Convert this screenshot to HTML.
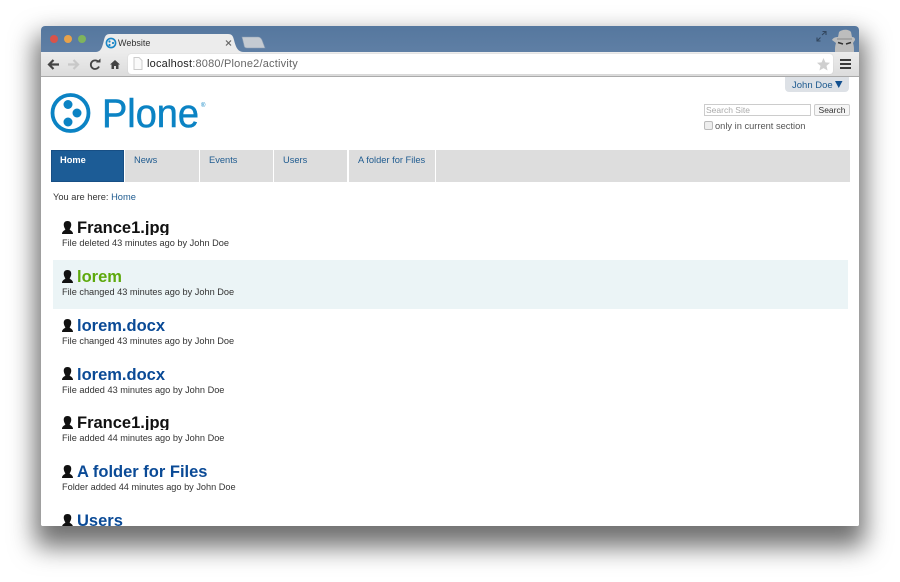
<!DOCTYPE html>
<html><head><meta charset="utf-8"><style>
html,body{margin:0;padding:0;background:#fff;width:900px;height:582px;overflow:hidden;font-family:"Liberation Sans",sans-serif}
.a{position:absolute;white-space:nowrap}
#win{position:absolute;left:41px;top:26px;width:818px;height:500px;border-radius:4px 4px 2px 2px;background:#fff;box-shadow:0 15px 25px 6px rgba(0,0,0,.56)}
#clip{position:absolute;left:0;top:0;width:818px;height:500px;overflow:hidden;border-radius:4px 4px 2px 2px;background:#fff}
.t{position:absolute;left:36px;font-weight:bold;font-size:16.5px;line-height:20px;white-space:nowrap;height:17px;overflow:hidden}
.s{position:absolute;left:21px;font-size:9.2px;line-height:12px;color:#333;white-space:nowrap}
.nav{position:absolute;top:124px;height:32px;background:#ddd;font-size:9.3px;color:#205c90}
.nav span{position:absolute;top:5px;white-space:nowrap}
</style></head><body>
<div id="win"><div id="clip">
<div class="a" style="left:0;top:0;width:818px;height:26px;background:linear-gradient(#55779e,#5f7fa5)"></div>
<svg class="a" style="left:0;top:0" width="230" height="27">
<circle cx="13" cy="13" r="4" fill="#d9534a"/><circle cx="27" cy="13" r="4" fill="#e8a24a"/><circle cx="41" cy="13" r="4" fill="#7fb45c"/>
<path d="M54 26C60 26 61 22 63 14C64 10 65 8 69 8H187C191 8 192 10 193 14C195 22 197 26 203 26Z" fill="#ececec"/>
<path d="M201 11H217C219 11 220 12 221 14L224 22H206C204 22 203 21 203 19Z" fill="#c5cbd2" stroke="#8a9cb2" stroke-width=".6"/>
<circle cx="70" cy="17" r="4.6" fill="none" stroke="#1a87c7" stroke-width="1.6"/><circle cx="68.5" cy="15.5" r="1.1" fill="#1a87c7"/><circle cx="72" cy="17" r="1.1" fill="#1a87c7"/><circle cx="68.5" cy="19" r="1.1" fill="#1a87c7"/>
<path d="M185 14.5L190 19.500M190 14.500L185 19.500" stroke="#666" stroke-width="1.200"/>
</svg>
<div class="a" style="left:77px;top:11px;font-size:9px;line-height:12px;color:#333">Website</div>
<svg class="a" style="left:770px;top:0" width="48" height="26">
<path d="M6 15L9.500 11.500M11 9L15 5.500M11.500 5.500H15V9M6 11.500V15H9.500" stroke="#33475f" stroke-width="1.100" fill="none"/>
<path d="M24 26C24 22 24 20 25 17L21 14C22 12 24 11 27 11L28 6C31 3 38 3 40 6L41 11C43 11 44 12 44 14L42 17C43 20 43 22 43 26Z" fill="#bdbdbd"/>
<path d="M26 13H41" stroke="#959595" stroke-width="1.200"/><path d="M27 16.500L32 18M40 16.500L35 18" stroke="#333" stroke-width="1.500"/>
</svg>
<div class="a" style="left:0;top:26px;width:818px;height:25px;background:linear-gradient(#ececec,#dcdcdc);border-bottom:1px solid #aaa;box-sizing:border-box"></div>
<svg class="a" style="left:0;top:26px" width="90" height="25">
<path d="M18 12.500H8M12.500 8L8 12.500L12.500 17" stroke="#444" stroke-width="2.200" fill="none"/>
<path d="M27 12.500H37M32.500 8L37 12.500L32.500 17" stroke="#c8c8c8" stroke-width="2.200" fill="none"/>
<path d="M57.500 10A4.300 4.300 0 1 0 58 14.500" stroke="#444" stroke-width="1.800" fill="none"/><path d="M55 10.500H59.500V6.500Z" fill="#444"/>
<path d="M69 12.500L74 8L79 12.500H77.500V17H75V14H73V17H70.500V12.500Z" fill="#444"/>
</svg>
<div class="a" style="left:87px;top:28px;width:705px;height:20px;background:#fff;border-radius:3px;box-shadow:0 0 1px #bbb"></div>
<svg class="a" style="left:92px;top:31px" width="10" height="13"><path d="M1 .5H6L9 3.500V12.500H1Z" fill="#fafafa" stroke="#ccc"/></svg>
<div class="a" style="left:106px;top:31px;font-size:11px;line-height:14px;letter-spacing:.2px;color:#666"><span style="color:#222">localhost</span>:8080/Plone2/activity</div>
<svg class="a" style="left:775px;top:31px" width="15" height="15"><path d="M7.500 1L9.400 5.400L14 5.800L10.500 8.900L11.600 13.500L7.500 11.100L3.400 13.500L4.500 8.900L1 5.800L5.600 5.400Z" fill="#cfcfcf"/></svg>
<svg class="a" style="left:799px;top:33px" width="12" height="11"><path d="M0 1H11M0 5H11M0 9H11" stroke="#222" stroke-width="1.800"/></svg>
<div class="a" style="left:744px;top:51px;width:64px;height:15px;background:#dde1e6;border-radius:0 0 4px 4px"></div>
<div class="a" style="left:751px;top:54px;font-size:9.5px;line-height:12px;color:#205c90">John Doe</div>
<svg class="a" style="left:794px;top:55px" width="8" height="7"><path d="M0 0H7.500L3.750 7Z" fill="#12508f"/></svg>
<svg class="a" style="left:9px;top:66px" width="160" height="44">
<circle cx="20.500" cy="21" r="18" fill="none" stroke="#0b83c4" stroke-width="3.800"/>
<circle cx="18" cy="12.500" r="4.500" fill="#0b83c4"/><circle cx="27" cy="21" r="4.500" fill="#0b83c4"/><circle cx="18" cy="30" r="4.500" fill="#0b83c4"/>
<text x="52" y="35" font-family="Liberation Sans" font-size="40" fill="#0b83c4" stroke="#0b83c4" stroke-width=".5" textLength="97" lengthAdjust="spacingAndGlyphs">Plone</text>
<text x="151" y="15" font-family="Liberation Sans" font-size="6" fill="#0b83c4">®</text>
</svg>
<div class="a" style="left:663px;top:78px;width:107px;height:12px;box-sizing:border-box;border:1px solid #ccc;background:#fff;font-size:8.500px;line-height:10px;color:#aaa;padding-left:1px">Search Site</div>
<div class="a" style="left:773px;top:78px;width:36px;height:12px;box-sizing:border-box;border:1px solid #ccc;border-radius:2px;background:#f6f6f6;font-size:8.500px;line-height:10px;color:#333;text-align:center">Search</div>
<div class="a" style="left:663px;top:95px;width:9px;height:9px;box-sizing:border-box;border:1px solid #bbb;border-radius:2px;background:#eee"></div>
<div class="a" style="left:674px;top:94px;font-size:9.300px;line-height:12px;color:#555">only in current section</div>
<div class="nav" style="left:10px;width:73px;background:#1c5c96;border:1px solid #174f85;box-sizing:border-box;color:#fff;font-weight:bold"><span style="left:8px;top:4px">Home</span></div>
<div class="nav" style="left:84px;width:74px"><span style="left:9px">News</span></div>
<div class="nav" style="left:159px;width:73px"><span style="left:9px">Events</span></div>
<div class="nav" style="left:233px;width:73px"><span style="left:9px">Users</span></div>
<div class="nav" style="left:308px;width:86px"><span style="left:9px">A folder for Files</span></div>
<div class="nav" style="left:395px;width:414px"></div>
<div class="a" style="left:12px;top:165px;font-size:9.300px;line-height:12px;color:#333">You are here: <span style="color:#205c90">Home</span></div>
<div class="a" style="left:12px;top:234px;width:795px;height:49px;background:#ebf4f6"></div>
<svg width="0" height="0" style="position:absolute"><defs><symbol id="u" viewBox="0 0 11 13"><path d="M5.500 0C8.500 0 9.500 2 9.200 4.500C9 6 8.300 7.500 7.600 8.300C8 9.500 11 10 11 13H0C0 10 3 9.500 3.400 8.300C2.700 7.500 2 6 1.800 4.500C1.500 2 2.500 0 5.500 0Z" fill="#111"/></symbol></defs></svg>
<svg class="a" style="left:21px;top:195px" width="11" height="13"><use href="#u"/></svg>
<div class="t" style="top:192px;color:#111">France1.jpg</div><div class="s" style="top:211px">File deleted 43 minutes ago by John Doe</div>
<svg class="a" style="left:21px;top:244px" width="11" height="13"><use href="#u"/></svg>
<div class="t" style="top:241px;color:#5da90c">lorem</div><div class="s" style="top:260px">File changed 43 minutes ago by John Doe</div>
<svg class="a" style="left:21px;top:293px" width="11" height="13"><use href="#u"/></svg>
<div class="t" style="top:290px;color:#0a4a96">lorem.docx</div><div class="s" style="top:309px">File changed 43 minutes ago by John Doe</div>
<svg class="a" style="left:21px;top:341px" width="11" height="13"><use href="#u"/></svg>
<div class="t" style="top:339px;color:#0a4a96">lorem.docx</div><div class="s" style="top:358px">File added 43 minutes ago by John Doe</div>
<svg class="a" style="left:21px;top:390px" width="11" height="13"><use href="#u"/></svg>
<div class="t" style="top:387px;color:#111">France1.jpg</div><div class="s" style="top:406px">File added 44 minutes ago by John Doe</div>
<svg class="a" style="left:21px;top:439px" width="11" height="13"><use href="#u"/></svg>
<div class="t" style="top:436px;color:#0a4a96">A folder for Files</div><div class="s" style="top:455px">Folder added 44 minutes ago by John Doe</div>
<svg class="a" style="left:21px;top:488px" width="11" height="13"><use href="#u"/></svg>
<div class="t" style="top:485px;color:#0a4a96">Users</div>
</div></div>
</body></html>
